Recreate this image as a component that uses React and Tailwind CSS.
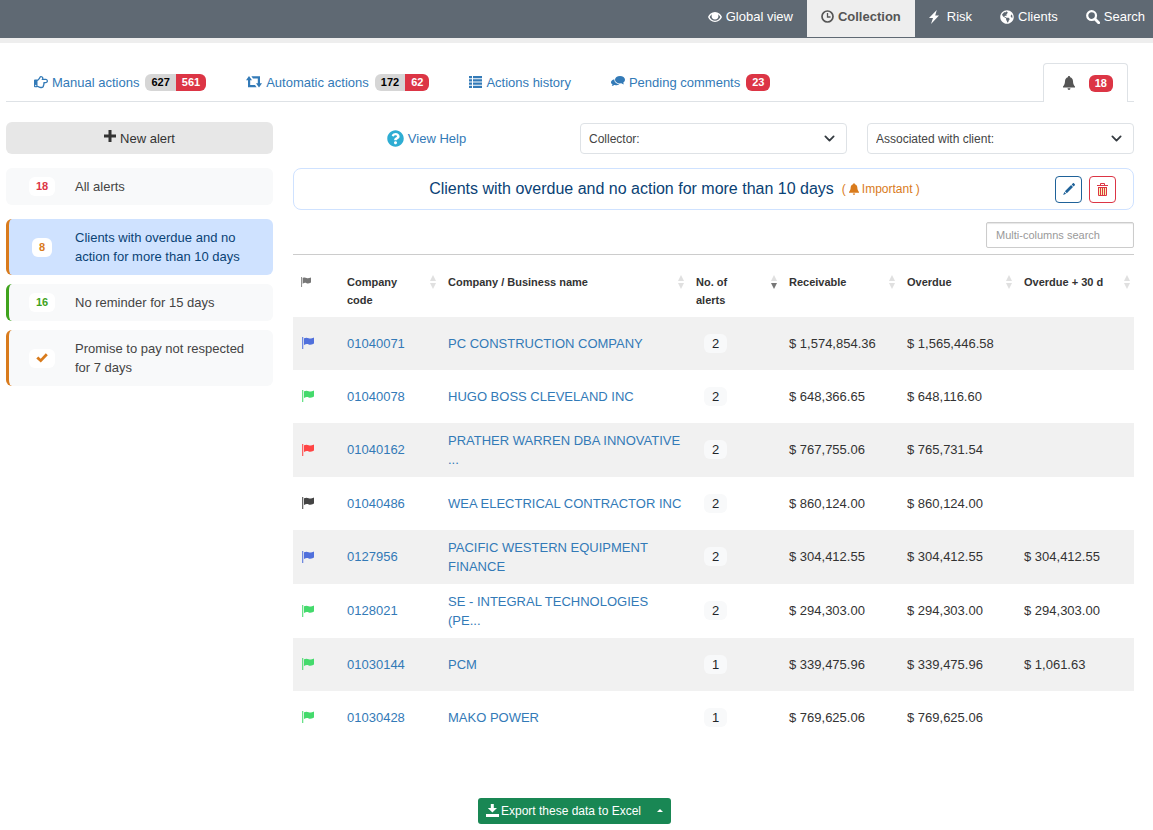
import React, { useState } from "react";
import {
  FaGlobeAmericas,
  FaQuestionCircle,
  FaRegHandPointRight,
} from "react-icons/fa";

/* ---------- Icons ---------- */

function EyeIcon({ className }) {
  return (
    <svg className={className} viewBox="0 0 14 12" fill="currentColor" aria-hidden="true">
      <path
        fillRule="evenodd"
        d="M7 1C3.600 1 1.200 3.300 0 6c1.200 2.700 3.600 5 7 5s5.800-2.300 7-5C12.800 3.300 10.400 1 7 1Zm0 8.700C4.500 9.700 2.700 8.200 1.600 6c.6-1.200 1.400-2.200 2.400-2.800-.3.600-.4 1.200-.4 1.800a3.400 3.400 0 0 0 6.800 0c0-.6-.1-1.200-.4-1.800 1 .6 1.800 1.600 2.400 2.800C11.300 8.200 9.500 9.700 7 9.700Z"
      />
      <circle cx="7" cy="5.200" r="2.500" />
    </svg>
  );
}

function ClockIcon({ className }) {
  return (
    <svg className={className} viewBox="0 0 13 13" fill="none" stroke="currentColor" aria-hidden="true">
      <circle cx="6.500" cy="6.500" r="5.500" strokeWidth="1.700" />
      <path d="M6.500 3v4h3" strokeWidth="1.300" />
    </svg>
  );
}

function FlashIcon({ className }) {
  return (
    <svg className={className} viewBox="0 0 10 14" fill="currentColor" aria-hidden="true">
      <path d="M7.800 0 0 8h4L2 14l8-8.600H6.200Z" />
    </svg>
  );
}

function SearchIcon({ className }) {
  return (
    <svg className={className} viewBox="0 0 14 14" fill="none" stroke="currentColor" aria-hidden="true">
      <circle cx="5.600" cy="5.600" r="4.400" strokeWidth="2.200" />
      <path d="m9 9 3.700 3.700" strokeWidth="2.800" strokeLinecap="round" />
    </svg>
  );
}

function RetweetIcon({ className }) {
  return (
    <svg className={className} viewBox="0 0 16 12" fill="currentColor" aria-hidden="true">
      <path d="M3 0 6 4.200H4.200V9H9l1.600 2.200H2V4.200H0Z" />
      <path d="M13 11.500 10 7.300h1.800V2.500H7L5.400.300H14v7h2Z" />
    </svg>
  );
}

function ListIcon({ className }) {
  return (
    <svg className={className} viewBox="0 0 13 12" fill="currentColor" aria-hidden="true">
      <path d="M0 0h3v2.200H0zM4 0h9v2.200H4zM0 3.300h3v2.200H0zM4 3.300h9v2.200H4zM0 6.600h3v2.200H0zM4 6.600h9v2.200H4zM0 9.800h3V12H0zM4 9.800h9V12H4z" />
    </svg>
  );
}

function CommentsIcon({ className }) {
  return (
    <svg className={className} viewBox="0 0 14 12" fill="currentColor" aria-hidden="true">
      <path d="M9 0C6.200 0 4 1.600 4 3.700c0 2 2.200 3.700 5 3.700.5 0 1 0 1.400-.1.900.8 1.700 1 2.600 1-.5-.6-.7-1.200-.7-1.800C13.400 5.800 14 4.800 14 3.700 14 1.600 11.800 0 9 0Z" />
      <path d="M3.300 3.200C1.300 3.700 0 4.800 0 6.200c0 .9.600 1.700 1.500 2.300 0 .5-.3 1-.8 1.500 1 0 1.900-.3 2.500-.9 2 .3 3.900 0 5-.9-2.600-.2-4.900-1.900-4.900-4.400Z" />
    </svg>
  );
}

function BellIcon({ className }) {
  return (
    <svg className={className} viewBox="0 0 12 14" fill="currentColor" aria-hidden="true">
      <path d="M6 0c.7 0 1.100.5 1.100 1.200C9 1.700 9.900 3.200 10 5.200c.1 2.500.7 4 2 5.300v1H0v-1c1.300-1.300 1.900-2.800 2-5.300.1-2 1-3.500 2.900-4C4.900.5 5.300 0 6 0ZM4.600 12.300h2.800C7.400 13.300 6.900 14 6 14s-1.400-.7-1.400-1.700Z" />
    </svg>
  );
}

function PlusIcon({ className }) {
  return (
    <svg className={className} viewBox="0 0 12 12" fill="currentColor" aria-hidden="true">
      <path d="M4.500 0h3v4.500H12v3H7.500V12h-3V7.500H0v-3h4.500Z" />
    </svg>
  );
}

function CheckIcon({ className }) {
  return (
    <svg className={className} viewBox="0 0 12 10" fill="currentColor" aria-hidden="true">
      <path d="m9.800.3 2 2L4.800 9.600.3 5.600l2-2L4.700 5.700Z" />
    </svg>
  );
}

function PencilIcon({ className }) {
  return (
    <svg className={className} viewBox="0 0 12 12" fill="currentColor" aria-hidden="true">
      <path d="M9.900.3c.3-.3.700-.3 1 0l.9.900c.3.300.3.700 0 1l-1.200 1.200-1.900-1.900ZM8.100 2.100 10 4 3.800 10.200 1.900 8.300ZM1.300 9l1.800 1.800L.2 11.900Z" />
    </svg>
  );
}

function TrashIcon({ className }) {
  return (
    <svg className={className} viewBox="0 0 11 13" aria-hidden="true">
      <path d="M2 4h7v8H2z" fill="#f7f5b0" />
      <path
        d="M3.500 2V.5h4V2M0 2.500h11M1.500 4v8.500h8V4M1 4.500h9M3.500 5v7M5.500 5v7M7.500 5v7"
        fill="none"
        stroke="currentColor"
      />
    </svg>
  );
}

function FlagIcon({ className }) {
  return (
    <svg className={className} viewBox="0 0 12 12" fill="currentColor" aria-hidden="true">
      <path d="M0 0h1.300v12H0z" opacity=".8" />
      <path d="M2 1.300C4 .2 5.300.7 6.700 1.200c1.500.5 2.800.3 5.300-.7v6c-2.300 1.300-3.800 1.400-5.300.9C5.300 6.900 4 6.800 2 8Z" />
    </svg>
  );
}

function DownloadIcon({ className }) {
  return (
    <svg className={className} viewBox="0 0 13 13" fill="currentColor" aria-hidden="true">
      <path d="M4.800 0h3v4H11L6.400 8.600 1.800 4h3ZM0 10h13v3H0Z" />
    </svg>
  );
}

function ChevronIcon({ className }) {
  return (
    <svg className={className} viewBox="0 0 16 16" fill="none" stroke="currentColor" aria-hidden="true">
      <path d="m2 5 6 6 6-6" strokeWidth="2.600" strokeLinecap="round" strokeLinejoin="round" />
    </svg>
  );
}

function SortIcon({ active }) {
  return (
    <svg className="h-3.5 w-1.5 shrink-0" viewBox="0 0 6 14" aria-hidden="true">
      <path d="M3 0 6 6H0Z" fill="#e0e0e0" />
      <path d="M0 8h6l-3 6Z" fill={active ? "#777" : "#e0e0e0"} />
    </svg>
  );
}

/* ---------- Data ---------- */

const navItems = [
  { label: "Global view", icon: <EyeIcon className="h-3 w-3.5" /> },
  { label: "Collection", icon: <ClockIcon className="h-[13px] w-[13px]" />, active: true },
  { label: "Risk", icon: <FlashIcon className="mr-1 h-3.5 w-2.5" /> },
  { label: "Clients", icon: <FaGlobeAmericas className="h-3.5 w-3.5" /> },
  { label: "Search", icon: <SearchIcon className="h-3.5 w-3.5" /> },
];

const tabs = [
  {
    label: "Manual actions",
    icon: <FaRegHandPointRight className="h-3.5 w-3.5" />,
    total: 627,
    late: 561,
  },
  {
    label: "Automatic actions",
    icon: <RetweetIcon className="h-3 w-4" />,
    total: 172,
    late: 62,
  },
  { label: "Actions history", icon: <ListIcon className="h-3 w-[13px]" /> },
  { label: "Pending comments", icon: <CommentsIcon className="h-3 w-3.5" />, late: 23 },
];

const alerts = [
  {
    label: "All alerts",
    badge: "18",
    style: "mb-3.5 bg-[#f8f9fa] text-[#444] border-[#f8f9fa]",
    badgeStyle: "text-[#dc3545]",
  },
  {
    label: "Clients with overdue and no action for more than 10 days",
    badge: "8",
    style: "mb-[9px] bg-[#cfe2ff] text-[#0a4275] border-[#d97b1c]",
    badgeStyle: "text-[#d97b1c]",
  },
  {
    label: "No reminder for 15 days",
    badge: "16",
    style: "mb-[9px] bg-[#f8f9fa] text-[#444] border-[#3fa31c]",
    badgeStyle: "text-[#3fa31c]",
  },
  {
    label: "Promise to pay not respected for 7 days",
    badge: <CheckIcon className="h-2.5 w-3" />,
    style: "bg-[#f8f9fa] text-[#444] border-[#d97b1c]",
    badgeStyle: "text-[#d97b1c]",
  },
];

const flagColors = {
  blue: "text-[#5070dc]",
  green: "text-[#44da6c]",
  red: "text-[#ff4444]",
  black: "text-[#444]",
};

const columns = [
  { label: "Company code", width: "w-[101px]" },
  { label: "Company / Business name", width: "" },
  { label: "No. of alerts", width: "w-[93px]", sorted: true },
  { label: "Receivable", width: "w-[118px]" },
  { label: "Overdue", width: "w-[117px]" },
  { label: "Overdue + 30 d", width: "w-[118px]" },
];

const clients = [
  { flag: "blue", code: "01040071", name: "PC CONSTRUCTION COMPANY", alerts: 2, receivable: "$ 1,574,854.36", overdue: "$ 1,565,446.58", overdue30: "" },
  { flag: "green", code: "01040078", name: "HUGO BOSS CLEVELAND INC", alerts: 2, receivable: "$ 648,366.65", overdue: "$ 648,116.60", overdue30: "" },
  { flag: "red", code: "01040162", name: "PRATHER WARREN DBA INNOVATIVE ...", alerts: 2, receivable: "$ 767,755.06", overdue: "$ 765,731.54", overdue30: "" },
  { flag: "black", code: "01040486", name: "WEA ELECTRICAL CONTRACTOR INC", alerts: 2, receivable: "$ 860,124.00", overdue: "$ 860,124.00", overdue30: "" },
  { flag: "blue", code: "0127956", name: "PACIFIC WESTERN EQUIPMENT FINANCE", alerts: 2, receivable: "$ 304,412.55", overdue: "$ 304,412.55", overdue30: "$ 304,412.55" },
  { flag: "green", code: "0128021", name: "SE - INTEGRAL TECHNOLOGIES (PE...", alerts: 2, receivable: "$ 294,303.00", overdue: "$ 294,303.00", overdue30: "$ 294,303.00" },
  { flag: "green", code: "01030144", name: "PCM", alerts: 1, receivable: "$ 339,475.96", overdue: "$ 339,475.96", overdue30: "$ 1,061.63" },
  { flag: "green", code: "01030428", name: "MAKO POWER", alerts: 1, receivable: "$ 769,625.06", overdue: "$ 769,625.06", overdue30: "" },
];

/* ---------- Layout parts ---------- */

function TopNav() {
  return (
    <nav className="flex h-[43px] justify-end border-b-[5px] border-[#eee] bg-[#5f6973]">
      {navItems.map((item) => (
        <a
          key={item.label}
          href="#"
          className={
            item.active
              ? "mb-px flex items-center gap-1 bg-[#eee] px-3.5 pb-1 font-bold text-[#555]"
              : "mb-px flex items-center gap-1 px-3.5 pb-1 text-white last:pr-2"
          }
        >
          {item.icon}
          {item.label}
        </a>
      ))}
    </nav>
  );
}

function CountBadge({ total, late }) {
  return (
    <span className="ml-0.5 flex overflow-hidden rounded-md text-[11px] leading-[17px] font-bold">
      {total && <span className="bg-[#d6d6d6] px-1.5 text-black">{total}</span>}
      <span className="bg-[#dc3545] px-1.5 text-white">{late}</span>
    </span>
  );
}

function ActionTabs() {
  return (
    <div className="flex h-[39px] items-stretch border-b border-[#dee2e6] pr-1.5 pl-7">
      <div className="flex flex-1 gap-10">
        {tabs.map((tab) => (
          <a key={tab.label} href="#" className="flex items-center gap-1 whitespace-nowrap text-[#337ab7]">
            {tab.icon}
            {tab.label}
            {tab.late && <CountBadge total={tab.total} late={tab.late} />}
          </a>
        ))}
      </div>
      <a
        href="#"
        aria-label="Alerts"
        className="-mb-px flex items-center gap-3 rounded-t border border-b-0 border-[#dee2e6] bg-white pr-3.5 pl-[19px] text-[#555]"
      >
        <BellIcon className="h-3.5 w-3" />
        <CountBadge late={18} />
      </a>
    </div>
  );
}

function AlertList() {
  return (
    <aside>
      <button className="mb-3.5 flex h-8 w-full items-center justify-center gap-1 rounded-md bg-[#e7e7e7] text-[#333]">
        <PlusIcon className="mb-1 h-3 w-3" />
        New alert
      </button>
      {alerts.map((alert) => (
        <a
          key={alert.label}
          href="#"
          className={`flex items-center rounded-md border-l-[3px] py-[9px] pr-6 ${alert.style}`}
        >
          <span className="flex w-[66px] shrink-0 justify-center">
            <span
              className={`flex h-[19px] items-center rounded-md bg-white px-[7px] text-[11px] font-bold ${alert.badgeStyle}`}
            >
              {alert.badge}
            </span>
          </span>
          <span>{alert.label}</span>
        </a>
      ))}
    </aside>
  );
}

function FilterSelect({ label }) {
  return (
    <div className="relative">
      <select
        aria-label={label}
        className="h-[31px] w-full appearance-none rounded border border-[#dee2e6] bg-white px-2 text-xs text-[#444]"
      >
        <option>{label}</option>
      </select>
      <ChevronIcon className="pointer-events-none absolute top-2.5 right-3 h-[11px] w-[11px] text-[#343a40]" />
    </div>
  );
}

function AlertHeader() {
  return (
    <div className="mt-3.5 flex h-[42px] items-center rounded-lg border border-[#cfe2ff] pr-[17px]">
      <div className="flex flex-1 items-center justify-center gap-2">
        <h1 className="text-base text-[#0a4275]">
          Clients with overdue and no action for more than 10 days
        </h1>
        <span className="flex items-center gap-[3px] text-xs text-[#d97b1c]">
          (
          <BellIcon className="h-3 w-2.5" />
          Important )
        </span>
      </div>
      <button
        aria-label="Edit alert"
        className="mr-[7px] flex h-[27px] w-[27px] items-center justify-center rounded border border-[#1f6299] text-[#1f6299]"
      >
        <PencilIcon className="h-3 w-3" />
      </button>
      <button
        aria-label="Delete alert"
        className="flex h-[27px] w-[27px] items-center justify-center rounded border border-[#dc3545] text-[#dc3545]"
      >
        <TrashIcon className="h-[13px] w-[11px]" />
      </button>
    </div>
  );
}

function ClientTable({ rows }) {
  return (
    <table className="mt-1.5 w-full table-fixed border-t border-[#ccc] text-left">
      <thead>
        <tr className="h-[62px] align-top text-[11px] leading-[18px] text-[#333]">
          <th className="w-[46px] px-2 pt-[22px]" aria-label="Flag">
            <FlagIcon className="h-2.5 w-2.5 text-[#777]" />
          </th>
          {columns.map((column) => (
            <th key={column.label} className={`pt-[18px] pr-1 pl-2 ${column.width}`}>
              <div className="flex items-start justify-between gap-3">
                <span>{column.label}</span>
                <span className="pt-0.5">
                  <SortIcon active={column.sorted} />
                </span>
              </div>
            </th>
          ))}
        </tr>
      </thead>
      <tbody>
        {rows.map((row) => (
          <tr key={row.code} className="h-[53px] odd:bg-[#f1f1f1]">
            <td className="py-2 pl-[9px]">
              <FlagIcon className={`h-3 w-3 ${flagColors[row.flag]}`} />
            </td>
            <td className="px-2 py-2">
              <a href="#" className="text-[#337ab7]">{row.code}</a>
            </td>
            <td className="py-2 pr-1 pl-2">
              <a href="#" className="text-[#337ab7]">{row.name}</a>
            </td>
            <td className="px-4 py-2">
              <span className="inline-block rounded-md bg-[#f8f9fa] px-2 text-[#212529]">
                {row.alerts}
              </span>
            </td>
            <td className="px-2 py-2">{row.receivable}</td>
            <td className="px-2 py-2">{row.overdue}</td>
            <td className="px-2 py-2">{row.overdue30}</td>
          </tr>
        ))}
      </tbody>
    </table>
  );
}

function App() {
  const [search, setSearch] = useState("");

  const rows = clients.filter((client) =>
    Object.values(client).join(" ").toLowerCase().includes(search.toLowerCase())
  );

  return (
    <div className="bg-white font-['Liberation_Sans',Arial,sans-serif] text-[13px] leading-[19px] text-[#333]">
      <TopNav />
      <main className="pt-5 pr-[19px] pl-1.5">
        <ActionTabs />
        <div className="mt-5 grid grid-cols-4 gap-5">
          <AlertList />
          <section className="col-span-3">
            <div className="grid grid-cols-3 items-center gap-5 pt-px">
              <a href="#" className="flex items-center justify-center gap-1 text-[#337ab7]">
                <FaQuestionCircle className="h-[17px] w-[17px] text-[#2eadd3]" />
                View Help
              </a>
              <FilterSelect label="Collector:" />
              <FilterSelect label="Associated with client:" />
            </div>
            <AlertHeader />
            <div className="mt-3 flex justify-end">
              <input
                type="text"
                value={search}
                onChange={(e) => setSearch(e.target.value)}
                placeholder="Multi-columns search"
                aria-label="Multi-columns search"
                className="h-[26px] w-[148px] rounded-xs border border-[#ccc] px-[9px] text-[11px] shadow-[inset_0_1px_1px_rgba(0,0,0,0.1)] placeholder:text-[#999]"
              />
            </div>
            <ClientTable rows={rows} />
          </section>
        </div>
      </main>
      <footer className="mt-[54px] flex justify-center pr-1 pb-1.5">
        <div className="flex h-[26px] overflow-hidden rounded-[3px] bg-[#198754] text-xs text-white">
          <button className="flex items-center gap-0.5 pr-2 pl-2">
            <DownloadIcon className="h-[13px] w-[13px]" />
            Export these data to Excel
          </button>
          <button aria-label="More export options" className="flex items-center px-2">
            <svg className="h-[3px] w-1.5" viewBox="0 0 6 3" fill="currentColor" aria-hidden="true">
              <path d="M3 0 6 3H0Z" />
            </svg>
          </button>
        </div>
      </footer>
    </div>
  );
}

export default App;
